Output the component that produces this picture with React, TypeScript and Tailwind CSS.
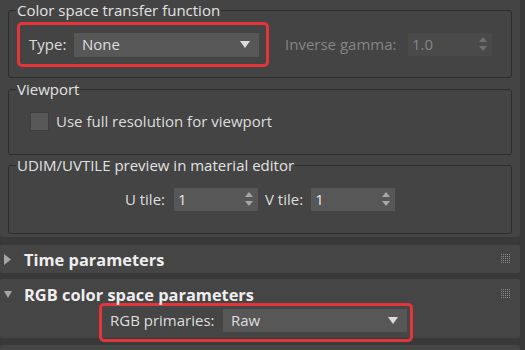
import type { ReactNode } from "react";

const DropArrow = () => (
  <svg width="10" height="7" viewBox="0 0 10 7" className="shrink-0">
    <path d="M0 0 H10 L5 7 Z" fill="#dcdcdc" />
  </svg>
);

const SpinArrows = ({ disabled }: { disabled?: boolean }) => (
  <svg width="8" height="15" viewBox="0 0 8 15" className="shrink-0">
    <path d="M4 0 L8 5 H0 Z" fill={disabled ? "#6f6f6f" : "#a8a8a8"} />
    <path d="M0 9 H8 L4 14 Z" fill={disabled ? "#6f6f6f" : "#a8a8a8"} />
  </svg>
);

const Grip = () => (
  <svg width="10" height="10" viewBox="0 0 10 10" className="shrink-0">
    {[0, 2, 4, 6, 8].map((y) =>
      [0, 2, 4, 6, 8].map((x) => (
        <rect key={`${x}-${y}`} x={x} y={y} width="1" height="1" fill="#8c8c8c" />
      ))
    )}
  </svg>
);

const Group = ({
  title,
  className,
  children,
}: {
  title: string;
  className?: string;
  children: ReactNode;
}) => (
  <fieldset
    className={`mx-[8px] border border-[#2c2c2c] rounded-[3px] px-[8px] ${className ?? ""}`}
  >
    <legend className="px-[1px] -ml-[1px] leading-[20px] text-[#e2e2e2]">{title}</legend>
    {children}
  </fieldset>
);

const Spinner = ({ value, disabled, w }: { value: string; disabled?: boolean; w: string }) => (
  <div
    className={`flex items-center justify-between h-[23px] pl-[4px] pr-[5px] ${w} ${
      disabled ? "bg-[#4a4a4a] text-[#858585]" : "bg-[#575757] text-[#e6e6e6]"
    }`}
  >
    <span>{value}</span>
    <SpinArrows disabled={disabled} />
  </div>
);

export default function App() {
  return (
    <div className="w-[525px] h-[350px] overflow-hidden bg-[#393939] text-[15px] leading-[19px] text-[#dedede] font-['Open_Sans',sans-serif]">
      {/* Main rollout with group boxes */}
      <div className="w-[520px] bg-[#444444] pb-[3px] rounded-b-[2px]">
        <Group title="Color space transfer function" className="pb-[10px]">
          <div className="flex items-center mt-[2px]">
            <div className="flex items-center w-[252px] h-[45px] border-[3px] border-[#e4353a] rounded-[5px] pl-[9px]">
              <span className="w-[45px]">Type:</span>
              <div className="flex items-center justify-between w-[185px] h-[24px] bg-[#575757] pl-[8px] pr-[9px]">
                <span>None</span>
                <DropArrow />
              </div>
            </div>
            <span className="ml-[16px] w-[123px] text-[#858585]">Inverse gamma:</span>
            <Spinner value="1.0" disabled w="w-[84px]" />
          </div>
        </Group>

        <Group title="Viewport" className="mt-[1px] pb-[23px]">
          <div className="flex items-center mt-[13px] pl-[13px] gap-[7px]">
            <div className="w-[19px] h-[19px] bg-[#585858] border border-[#3e3e3e]" />
            <span>Use full resolution for viewport</span>
          </div>
        </Group>

        <Group title="UDIM/UVTILE preview in material editor" className="pb-[22px]">
          <div className="flex items-center justify-center mt-[13px]">
            <span className="mr-[9px]">U tile:</span>
            <Spinner value="1" w="w-[84px]" />
            <span className="ml-[7px] mr-[8px]">V tile:</span>
            <Spinner value="1" w="w-[84px]" />
          </div>
        </Group>
      </div>

      {/* Time parameters rollout */}
      <div className="w-[520px] h-[28px] mt-[8px] bg-[#454545] rounded-[2px] flex items-center pl-[4px] pr-[9px]">
        <svg width="7" height="11" viewBox="0 0 7 11" className="shrink-0">
          <path d="M0 0 L7 5.5 L0 11 Z" fill="#a6a6a6" />
        </svg>
        <span className="ml-[13px] font-bold text-[16.4px] text-[#eeeeee] flex-1">Time parameters</span>
        <Grip />
      </div>

      {/* RGB color space parameters rollout */}
      <div className="w-[520px] h-[59px] mt-[6px] bg-[#454545] rounded-[2px]">
        <div className="h-[24px] flex items-center pl-[4px] pr-[9px] pt-[6px]">
          <svg width="8" height="7" viewBox="0 0 8 7" className="shrink-0">
            <path d="M0 0 H8 L4 7 Z" fill="#a6a6a6" />
          </svg>
          <span className="ml-[12px] font-bold text-[16.4px] text-[#eeeeee] flex-1">RGB color space parameters</span>
          <Grip />
        </div>
        <div className="ml-[99px] flex items-start w-[314px] h-[39px] border-[3px] border-[#e4353a] rounded-[5px] pl-[8px] pt-[3px]">
          <span className="w-[113px] h-[23px] flex items-center">RGB primaries:</span>
          <div className="flex items-center justify-between w-[184px] h-[23px] bg-[#575757] pl-[8px] pr-[9px]">
            <span>Raw</span>
            <DropArrow />
          </div>
        </div>
      </div>

      {/* Next rollout */}
      <div className="w-[520px] h-[20px] mt-[7px] bg-[#454545] rounded-[2px]" />
    </div>
  );
}
